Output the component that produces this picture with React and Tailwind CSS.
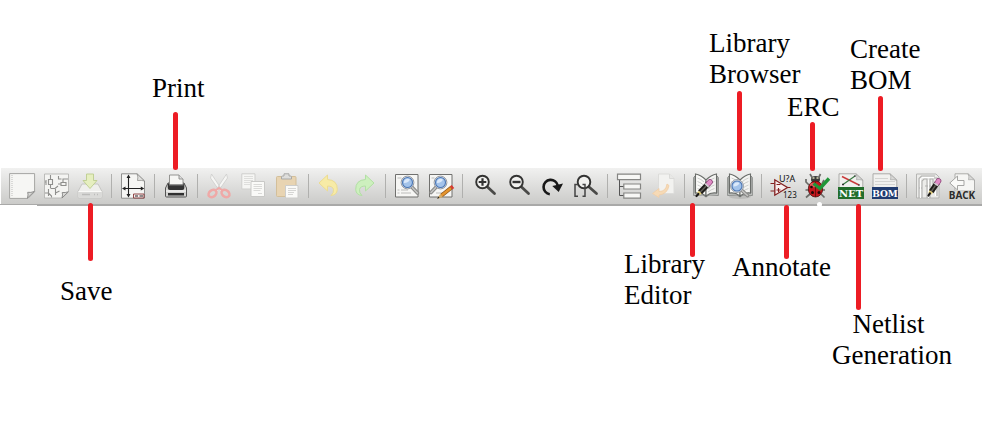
import React from 'react';

function Icon({ children }) {
  return (
    <svg viewBox="0 0 26 26" className="size-[26px] overflow-visible" fill="none" aria-hidden="true">
      {children}
    </svg>
  );
}

function Lens({ x, y, tx, ty }) {
  return (
    <>
      <path d={`M${x} ${y}L${tx} ${ty}`} stroke="#8a8a88" strokeWidth="3.6" strokeLinecap="round" />
      <path d={`M${x} ${y}L${tx} ${ty}`} stroke="#c4c4c2" strokeWidth="1.6" strokeLinecap="round" />
      <circle cx={x} cy={y} r="6.4" fill="#e6e9ee" stroke="#8d9299" strokeWidth="0.9" />
      <circle cx={x} cy={y} r="5" fill="#a3c3ea" stroke="#4a76b4" strokeWidth="1.1" />
      <path d={`M${x - 3.6} ${y + 0.6}a3.8 3.8 0 0 1 6-3.6q-1 3.4-6 3.6`} fill="#dbe9fa" />
    </>
  );
}

function Pencil({ x1, y1, x2, y2 }) {
  const dx = x2 - x1;
  const dy = y2 - y1;
  const at = (t) => `${x1 + dx * t} ${y1 + dy * t}`;
  return (
    <>
      <path d={`M${at(0.1)}L${at(0.74)}`} stroke="#1f1d1a" strokeWidth="5.4" />
      <path d={`M${at(0.3)}L${at(0.74)}`} stroke="#66645c" strokeWidth="1.4" />
      <path d={`M${at(0)}L${at(0.12)}`} stroke="#8a3f74" strokeWidth="5.6" strokeLinecap="round" />
      <path d={`M${at(0)}L${at(0.12)}`} stroke="#e08cc6" strokeWidth="4.2" strokeLinecap="round" />
      <path d={`M${at(0.19)}L${at(0.28)}`} stroke="#cfcfcf" strokeWidth="4.6" />
      <path d={`M${at(0.72)}L${at(0.86)}`} stroke="#e3d07c" strokeWidth="3.8" />
      <path d={`M${at(0.86)}L${at(1)}`} stroke="#1c1a18" strokeWidth="2.2" strokeLinecap="round" />
    </>
  );
}

function Book() {
  return (
    <>
      <path d="M2 3 .6 4.500V22.500l9.400-.5 3 2 3-2 9.400.5V4.500L24 3v17H2z" fill="#c2c4c2" stroke="#7f827f" strokeWidth=".8" />
      <path d="M2.500 1Q8 2 13 7v16Q8 19 2.500 20z" fill="#fafaf8" stroke="#6a6d6a" strokeWidth="1.100" />
      <path d="M23.500 1Q18 2 13 7v16q5-4 10.500-3z" fill="#f4f4f2" stroke="#6a6d6a" strokeWidth="1.100" />
      <path d="M4.500 5Q8 6 11 9M4.500 8.500Q8 9.500 11 12.500M4.500 12Q8 13 11 16M4.500 15.500q3.500 1 6.500 3.500M21.500 5Q18 6 15 9M21.500 8.500Q18 9.500 15 12.500M21.500 12Q18 13 15 16M21.500 15.500q-3.500 1-6.500 3.500" stroke="#c6c8c6" strokeWidth=".9" />
    </>
  );
}

function Zoomer({ x }) {
  return (
    <>
      <path d={`M${x + 4.5} 13.500 23.500 20.500`} stroke="#4a4a48" strokeWidth="2.800" strokeLinecap="round" />
      <circle cx={x} cy="9" r="6.300" fill="#f1f1ef" stroke="#333332" strokeWidth="1.900" />
    </>
  );
}

const foldedPage = 'M1 .8h17L24.800 7v18.200H1z';

const icons = {
  new: (
    <Icon>
      <path d="M.6.6h25v18.200L19 25.400H.6z" fill="#f6f6f4" stroke="#a5a5a3" />
      <path d="M3 2v22" stroke="#bdbdbb" strokeDasharray="1 1" />
      <path d="M25.300 18.500 18.500 25q1-3.500.2-5.700 3 .6 6.600-.8z" fill="#d8d8d6" stroke="#858583" strokeWidth=".9" />
    </Icon>
  ),
  open: (
    <Icon>
      <path d="M1.500 1h24v18L19 25H1.500z" fill="#f4f4f2" stroke="#b5b5b3" strokeWidth=".9" />
      <path d="M7.500 2v4M5.500 6.500h4v5h-4zM7.500 12v3M2 9h1.500M3 7v5M7.500 15.500H12l3-2.500M5.500 16v7M2 20h3.500l3 3v1.500M12.500 16v6M12.500 20l4-2M15 11h3M18 9.500h5v3h-5zM20 9V6h5M15.500 3v3h3" stroke="#8f8f8d" strokeWidth="1.100" />
      <path d="M25.300 18.800 19 25q1-3.500.2-5.500 3 .4 6.100-.7z" fill="#d8d8d6" stroke="#858583" strokeWidth=".9" />
    </Icon>
  ),
  save: (
    <Icon>
      <path d="M5 11h16l4 7.500V24q0 1-1 1H2q-1 0-1-1v-5.500z" fill="#efefed" stroke="#c6c6c4" />
      <path d="M1.500 18.500h23V24.500h-23z" fill="#dadad8" />
      <path d="M1.500 18.500h23" stroke="#fafaf8" />
      <path d="M5 21.500h8M17 21.500h1M20 21.500h1" stroke="#bcbcba" strokeWidth="1.500" />
      <path d="M9.500 1h7v6.500H20L13 15.500 6 7.500h3.500z" fill="#e6efc0" stroke="#bccd8e" strokeWidth=".9" />
    </Icon>
  ),
  page: (
    <Icon>
      <path d="M1.500.8H17L24.500 8v17.200h-23z" fill="#f6f6f4" stroke="#858583" strokeWidth=".9" />
      <path d="M17 .8Q18.500 4 17.500 7.500q4-.5 7 .5z" fill="#e2e2e0" stroke="#858583" strokeWidth=".7" />
      <path d="M8.500 3v20M3 15.500h20" stroke="#222" strokeWidth="1.100" />
      <path d="m8.500 1.500 2 3.500h-4zM8.500 24.500l2-3.500h-4zM2 15.500l3.500-2v4zM24.300 15.500l-3.500-2v4z" fill="#222" />
      <path d="M13.500 21h10.500v4H13.500z" fill="#f8f0f0" stroke="#843535" strokeWidth=".9" />
      <path d="M15 23h3M19.500 23H23" stroke="#222" strokeWidth="1.100" />
    </Icon>
  ),
  print: (
    <Icon>
      <path d="M5 10h16l2.500 5v8q0 1-1 1h-19q-1 0-1-1v-8z" fill="#d2d2d0" stroke="#555" />
      <path d="M4.800 10.500h16.500v4.500q0 2-2 2H6.800q-2 0-2-2z" fill="#333" />
      <path d="M6.500 2H16l4 4v6H6.500z" fill="#f6f6f4" stroke="#8a8a88" strokeWidth=".9" />
      <path d="M16 2v4h4" fill="#ddd" stroke="#8a8a88" strokeWidth=".9" />
      <path d="M6 12.300h14.500" stroke="#555" strokeWidth="1.500" />
      <path d="M3 18h20" stroke="#fff" />
      <path d="M5 20h16v2.500H5z" fill="#303030" />
    </Icon>
  ),
  cut: (
    <Icon>
      <path d="m5.500 1 10.500 16-2 1.500L4.500 5zM20.500 1 10 17l2 1.500L21.500 5z" fill="#f6f6f4" stroke="#cdcdcb" strokeWidth=".8" />
      <ellipse cx="6.500" cy="20.500" rx="4.300" ry="3.300" transform="rotate(-40 6.500 20.500)" stroke="#efa9a7" strokeWidth="2.600" />
      <ellipse cx="19.500" cy="20.500" rx="4.300" ry="3.300" transform="rotate(40 19.500 20.500)" stroke="#efa9a7" strokeWidth="2.600" />
      <path d="m9.500 17.500 3.500-2.500 3.500 2.500" stroke="#efa9a7" strokeWidth="2" />
    </Icon>
  ),
  copy: (
    <Icon>
      <path d="M1.800.8H15V16H1.800z" fill="#f6f6f4" stroke="#cfcfcd" />
      <path d="M4 3.500h9M4 5.500h9M4 7.500h9M4 9.500h6M4 11.500h6" stroke="#dededc" />
      <path d="M11 8.500h13.500v15H11z" fill="#fafaf8" stroke="#c9c9c7" />
      <path d="M13.500 11.500h8.500M13.500 13.500h8.500M13.500 15.500h8.500M13.500 17.500h7M18 20.500h4" stroke="#dadad8" />
    </Icon>
  ),
  paste: (
    <Icon>
      <rect x="2.500" y="3.500" width="19.500" height="20" rx="1" fill="#e8d4b2" stroke="#d3bf9a" />
      <path d="M7.500 6V4q0-1 1-1h1.500V.8h5V3h1.500q1 0 1 1v2z" fill="#dededc" stroke="#a9a9a7" />
      <path d="M11.500 12.500H24V25H11.500z" fill="#fafaf8" stroke="#cdcdcb" />
      <path d="M14 15.500h8M14 17.500h8M14 19.500h6M14 21.500h5" stroke="#d6d6d4" />
    </Icon>
  ),
  undo: (
    <Icon>
      <path d="M2 10 10.500 2v4.500q10 .5 9.800 10-.3 5.500-6.300 6 3-2.500 2.500-6-.5-3.300-6-3.500v5z" fill="#f7eba6" stroke="#ecdc92" />
    </Icon>
  ),
  redo: (
    <Icon>
      <path d="M23 10 14.500 2v4.500q-10 .5-9.800 10 .3 5.500 6.300 6-3-2.500-2.500-6 .5-3.300 6-3.500v5z" fill="#cdf0be" stroke="#b2e0a4" />
    </Icon>
  ),
  find: (
    <Icon>
      <path d="M1.500 1.500h22.500v22.500H1.500z" fill="#f6f6f4" stroke="#70706e" />
      <path d="M3.500 5h4M3.500 17h2M7 17h7M3.500 20h2M7 20h10" stroke="#bcbcba" />
      <Lens x={13.5} y={9.5} tx={23.5} ty={20} />
    </Icon>
  ),
  replace: (
    <Icon>
      <path d="M1.500 1.500h22.500v22.500H1.500z" fill="#f6f6f4" stroke="#70706e" />
      <path d="M3.500 5h3M8 20h7" stroke="#bcbcba" />
      <Lens x={12.5} y={9.5} tx={3} ty={19.5} />
      <path d="m23.500 14.500-10 8" stroke="#8a5318" strokeWidth="4" />
      <path d="m23 15-9.500 7.500" stroke="#e5952f" strokeWidth="2.600" />
      <path d="m25 13.500-1.800 1.400" stroke="#d83a30" strokeWidth="4" />
      <path d="m12.200 21 2.600 3.300-5.800 1.400z" fill="#d7ad68" />
      <path d="m9 25.700 1.500-2.300 1 1.600z" fill="#222" />
    </Icon>
  ),
  zoomIn: (
    <Icon>
      <Zoomer x={11.5} />
      <path d="M7.700 9h7.600M11.500 5.200v7.600" stroke="#333" strokeWidth="2.200" />
    </Icon>
  ),
  zoomOut: (
    <Icon>
      <Zoomer x={11.5} />
      <path d="M7.500 9h8" stroke="#333" strokeWidth="2.400" />
    </Icon>
  ),
  redraw: (
    <Icon>
      <path d="M10.800 21.200A7.200 7.200 0 1 1 18.800 12.500" stroke="#181818" strokeWidth="2.600" />
      <path d="m13.300 13 10.700-2.500-4.300 8.500z" fill="#181818" />
    </Icon>
  ),
  fit: (
    <Icon>
      <Zoomer x={11} />
      <path d="M5 11.500H2v11.800h3M9.500 11.500H12v11.800H9.500" stroke="#444" strokeWidth="1.500" />
    </Icon>
  ),
  hierarchy: (
    <Icon>
      <path d="M3.500 7v15.500H8M3.500 13.500H8" stroke="#555" />
      <path d="M1.500 1.200h23v5.500h-23zM7.800 11h16.700v5H7.800zM7.800 20h16.700v5.200H7.800z" fill="#f7f7f5" stroke="#858583" strokeWidth="1.200" />
    </Icon>
  ),
  leave: (
    <Icon>
      <path d="M8.500 1h11L24 5.500v15H8.500z" fill="#f2f2f0" stroke="#dcdcda" />
      <path d="M19.500 1v4.500H24" fill="#e8e8e6" stroke="#dadad8" />
      <path d="m2.500 20.500 6.500-5v3q7 0 8-7.500l2 1.500q-1.500 8.500-10 9.500v2.500z" fill="#f6dab6" stroke="#f0cda4" strokeWidth=".8" />
    </Icon>
  ),
  libEdit: (
    <Icon>
      <Book />
      <Pencil x1={17} y1={9} x2={3.5} y2={23} />
    </Icon>
  ),
  libBrowse: (
    <Icon>
      <ellipse cx="13" cy="23.500" rx="11" ry="2.500" fill="#bdbdbb" />
      <Book />
      <Lens x={10} y={13} tx={20.5} ty={22.5} />
    </Icon>
  ),
  annotate: (
    <Icon>
      <path d="M.5 10.500h4M.5 18h4M17.500 14.500h3" stroke="#842020" strokeWidth="1.200" />
      <path d="M4.800 6.800v15.400l12.700-7.700z" fill="#f8eeee" stroke="#842020" strokeWidth="1.300" />
      <path d="M6.500 11.500h4M6.500 17h4M8.500 15v4" stroke="#842020" strokeWidth="1.100" />
      <text x="9" y="8.500" fontSize="9" fill="#111" fontFamily="Noto Sans, sans-serif">U?A</text>
      <text x="13" y="25" fontSize="8" fill="#111" fontFamily="Noto Sans, sans-serif">123</text>
    </Icon>
  ),
  erc: (
    <Icon>
      <path d="M8.500 5 6 1M14.500 5l2-4M5 12 2 9V6M18 11l2-4M5 17H1.500M17.500 17H21M6 21l-4 3.500M17 21l3.500 3.500" stroke="#6b6b67" strokeWidth="1.700" />
      <ellipse cx="11.500" cy="6.500" rx="4.500" ry="3.500" fill="#3c3c3a" />
      <path d="M8.500 5h2M12.500 5h2" stroke="#d8d8b8" strokeWidth="1.300" />
      <ellipse cx="11.500" cy="16" rx="7.200" ry="8" fill="#c4161c" stroke="#4a1010" strokeWidth=".8" />
      <ellipse cx="9" cy="12" rx="3" ry="2.300" fill="#e4575a" />
      <path d="M11.500 8.500V24" stroke="#5c0b0b" strokeWidth=".8" />
      <circle cx="7.500" cy="14" r="1.300" fill="#210808" />
      <circle cx="8.500" cy="19.500" r="1.500" fill="#210808" />
      <circle cx="15" cy="19.500" r="1.500" fill="#210808" />
      <path d="m9.500 10.500 6.500 5L25 5.500" stroke="#1f9638" strokeWidth="3.400" />
    </Icon>
  ),
  net: (
    <Icon>
      <path d={foldedPage} fill="#f1f1ef" stroke="#a5a5a3" strokeWidth=".9" />
      <path d="M18 .8q1.500 3 .5 6 3.500-.5 6.300.4z" fill="#d8d8d6" stroke="#a5a5a3" strokeWidth=".7" />
      <path d="m4 3.500 17 8.500" stroke="#ca3c3c" strokeWidth="1.400" />
      <path d="m5 11.500 12-8.500" stroke="#397b43" strokeWidth="1.200" />
      <path d="M5 10.500v2M4 11.500h2M20 12h2M16 3h2" stroke="#333" />
      <path d="M0 14h26v12H0z" fill="#226d2b" />
      <text x="13" y="24" fontSize="10" fontWeight="700" textAnchor="middle" fill="#fff" fontFamily="DejaVu Serif, serif">NET</text>
    </Icon>
  ),
  bom: (
    <Icon>
      <path d={foldedPage} fill="#f1f1ef" stroke="#a5a5a3" strokeWidth=".9" />
      <path d="M18 .8q1.500 3 .5 6 3.500-.5 6.300.4z" fill="#d8d8d6" stroke="#a5a5a3" strokeWidth=".7" />
      <path d="M3 5.500h13M3 8.500h20M3 11.500h20" stroke="#d4d4d2" />
      <path d="M0 14h26v12H0z" fill="#213c70" />
      <text x="13" y="23.500" fontSize="9" fontWeight="700" textAnchor="middle" fill="#fff" fontFamily="DejaVu Serif, serif">BOM</text>
    </Icon>
  ),
  pcb: (
    <Icon>
      <path d="M1.500 1H21l3 3v21H1.500z" fill="#ececea" stroke="#b5b5b3" />
      <path d="M4 25V5.500L6.500 3H20M7 25V8l2-2h3v19M10 13h6M15 25V6h3v10M19 5h3v18M4 15h3" stroke="#b0b0ae" strokeWidth="1.100" />
      <path d="M5.500 25V6L7 4.500h12M13.500 25V7M20.500 7v16" stroke="#fff" />
      <Pencil x1={23.5} y1={8} x2={13.5} y2={22.5} />
    </Icon>
  ),
  back: (
    <Icon>
      <path d="M6 17V.8h13L25.500 7v11H6z" fill="#f6f6f4" stroke="#a5a5a3" strokeWidth=".9" />
      <path d="M19 .8q1.500 3 .5 6 3.500-.5 6 .2z" fill="#d8d8d6" stroke="#a5a5a3" strokeWidth=".7" />
      <path d="M.8 10 8.500 3v4.500H15v5H8.500V17z" fill="#fafaf8" stroke="#a5a5a3" />
      <path d="M0 17.500h26V26H0z" fill="#d6d6d4" />
      <text x="13" y="26" fontSize="10" fontWeight="700" textAnchor="middle" fill="#2d2d2c" fontFamily="Noto Sans, sans-serif">BACK</text>
    </Icon>
  ),
};

const groups = [
  [['new', 'New schematic'], ['open', 'Open schematic'], ['save', 'Save']],
  [['page', 'Page settings']],
  [['print', 'Print']],
  [['cut', 'Cut'], ['copy', 'Copy'], ['paste', 'Paste']],
  [['undo', 'Undo'], ['redo', 'Redo']],
  [['find', 'Find'], ['replace', 'Find and replace']],
  [['zoomIn', 'Zoom in'], ['zoomOut', 'Zoom out'], ['redraw', 'Redraw'], ['fit', 'Zoom to fit']],
  [['hierarchy', 'Navigate hierarchy'], ['leave', 'Leave sheet']],
  [['libEdit', 'Library editor'], ['libBrowse', 'Library browser']],
  [['annotate', 'Annotate'], ['erc', 'Electrical rules check'], ['net', 'Generate netlist'], ['bom', 'Create BOM']],
  [['pcb', 'Footprint editor'], ['back', 'Back annotate']],
];

const callouts = [
  { lines: ['Print'], place: 'left-[152px] top-[73px]', bar: 'left-[173px] top-[112px] h-[58px]' },
  { lines: ['Save'], place: 'left-[60px] top-[276px]', bar: 'left-[88px] top-[203px] h-[58px]' },
  { lines: ['Library', 'Browser'], place: 'left-[709px] top-[28px]', bar: 'left-[737px] top-[91px] h-[80px]' },
  { lines: ['ERC'], place: 'left-[787px] top-[92px]', bar: 'left-[810px] top-[122px] h-[49px]' },
  { lines: ['Create', 'BOM'], place: 'left-[850px] top-[34px]', bar: 'left-[878px] top-[96px] h-[75px]' },
  { lines: ['Library', 'Editor'], place: 'left-[624px] top-[249px]', bar: 'left-[690px] top-[203px] h-[54px]' },
  { lines: ['Annotate'], place: 'left-[732px] top-[252px]', bar: 'left-[784px] top-[205px] h-[54px]' },
  { lines: ['Netlist\u00a0', 'Generation'], place: 'left-[832px] top-[309px] text-center', bar: 'left-[856px] top-[204px] h-[106px]' },
];

function Toolbar() {
  return (
    <div className="pl-px">
      <div role="toolbar" aria-label="Schematic editor" className="flex h-9 items-center bg-linear-to-b from-[#f1f1f0] to-[#cbcbc9] pl-1">
        {groups.map((group, i) => (
          <React.Fragment key={group[0][0]}>
            {i > 0 && <div className="flex w-[9px] shrink-0 justify-center"><div className="h-6 w-px bg-[#b0b0ae]" /></div>}
            {group.map(([id, label]) => (
              <button key={id} type="button" aria-label={label} className="flex h-9 w-[34px] shrink-0 items-center justify-center">
                {icons[id]}
              </button>
            ))}
          </React.Fragment>
        ))}
      </div>
    </div>
  );
}

export default function App() {
  return (
    <main className="relative min-h-screen overflow-hidden bg-white pt-[168px]">
      <Toolbar />
      <div className="flex items-start">
        <div className="h-px w-[37px] bg-[#a9a9a8]" />
        <div className="h-0.5 flex-1 bg-[#a9a9a8]" />
      </div>
      <div className="absolute top-[202px] left-[817px] size-[5px] rounded-full bg-white" />
      {callouts.map(({ lines, place, bar }) => (
        <React.Fragment key={lines.join(' ')}>
          <div className={`absolute w-[5px] rounded-full bg-[#ed1c24] ${bar}`} />
          <p className={`absolute font-['Liberation_Serif',serif] text-[27px] leading-[31px] whitespace-nowrap text-black ${place}`}>
            {lines.map((line) => <span key={line} className="block">{line}</span>)}
          </p>
        </React.Fragment>
      ))}
    </main>
  );
}
